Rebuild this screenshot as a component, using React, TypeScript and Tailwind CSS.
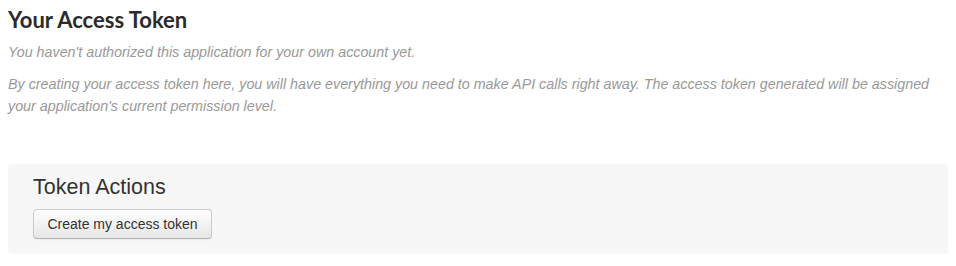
export default function App() {
  return (
    <div className="w-[956px] h-[266px] bg-white px-2 pt-[7px] font-[family-name:'Liberation_Sans',Arial,sans-serif]">
      <h2 className="text-[22px] leading-[26px] font-bold text-[#2b2b2b] font-[family-name:'Lato','Open_Sans',sans-serif]">
        Your Access Token
      </h2>
      <p className="mt-[8px] text-[14.3px] leading-[22px] italic text-[#999999]">
        You haven't authorized this application for your own account yet.
      </p>
      <p className="mt-[10px] text-[14.3px] leading-[22px] italic text-[#999999]">
        By creating your access token here, you will have everything you need to make API calls right away. The access
        token generated will be assigned your application's current permission level.
      </p>
      <div className="mt-[47px] h-[90px] rounded-[4px] bg-[#f7f7f7] px-[25px] pt-[10px]">
        <h3 className="text-[21.5px] leading-[26px] text-[#333333]">Token Actions</h3>
        <button className="mt-[9px] h-[30px] w-[179px] rounded-[4px] border border-[#cccccc] border-b-[#b3b3b3] bg-gradient-to-b from-white to-[#e6e6e6] text-[14px] text-[#333333] shadow-[inset_0_1px_0_rgba(255,255,255,0.2),0_1px_2px_rgba(0,0,0,0.05)]">
          Create my access token
        </button>
      </div>
    </div>
  );
}
